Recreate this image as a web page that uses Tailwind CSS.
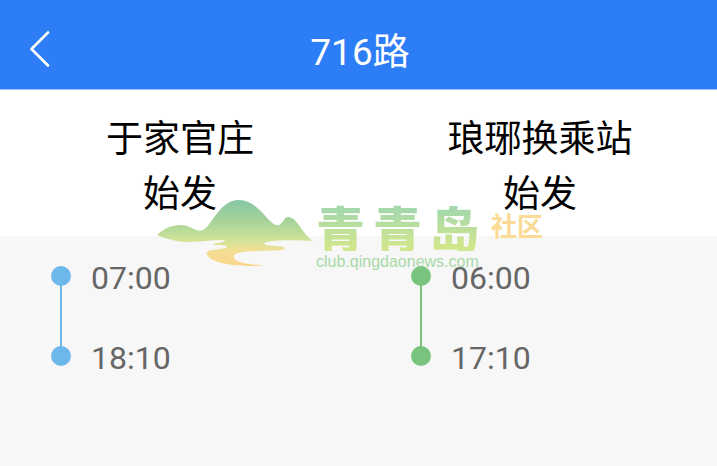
<!DOCTYPE html>
<html lang="zh-CN">
<head>
<meta charset="utf-8">
<meta name="viewport" content="width=device-width, initial-scale=1">
<title>716路</title>
<script src="https://cdn.jsdelivr.net/npm/@tailwindcss/browser@4"></script>
</head>
<body class="min-h-screen overflow-x-hidden bg-[#f7f7f7] font-[Roboto,'Noto_Sans_CJK_SC',sans-serif]">
<div class="relative isolate -mr-[3px]">
  <header class="grid h-[90px] grid-cols-[1fr_auto_1fr] items-center border-b border-[#9cc0fb] bg-[#2d7df6] pt-2 text-white">
    <button type="button" aria-label="返回" class="ml-5 flex size-10 items-center justify-center">
      <svg class="h-9 w-5" viewBox="0 0 20 36" fill="none" stroke="currentColor" stroke-width="2.6" stroke-linecap="round" stroke-linejoin="round"><path d="M18 1.500 1.500 18 18 34.500"/></svg>
    </button>
    <h1 class="pt-2 text-[37px] leading-[55px]">716路</h1>
  </header>
  <main>
    <div class="grid grid-cols-2 bg-white pt-[22px] pb-[14px] text-center text-[37px] leading-[55px] text-black">
      <h2 class="relative z-10">于家官庄<br>始发</h2>
      <h2 class="relative z-10">琅琊换乘站<br>始发</h2>
    </div>
    <div class="relative z-10 grid grid-cols-2 text-[32px] leading-[40px] text-[#666]">
      <ul class="relative pl-[51px]">
        <li class="flex h-20 items-center gap-5"><span class="size-5 rounded-full bg-[#6cb8ea]"></span><time class="pt-1">07:00</time></li>
        <li class="flex h-20 items-center gap-5"><span class="size-5 rounded-full bg-[#6cb8ea]"></span><time class="pt-1">18:10</time></li>
        <li aria-hidden="true" class="absolute top-10 bottom-10 left-[60px] w-0.5 bg-[#6cb8ea]"></li>
      </ul>
      <ul class="relative pl-[51px]">
        <li class="flex h-20 items-center gap-5"><span class="size-5 rounded-full bg-[#78c47f]"></span><time class="pt-1">06:00</time></li>
        <li class="flex h-20 items-center gap-5"><span class="size-5 rounded-full bg-[#78c47f]"></span><time class="pt-1">17:10</time></li>
        <li aria-hidden="true" class="absolute top-10 bottom-10 left-[60px] w-0.5 bg-[#78c47f]"></li>
      </ul>
    </div>
  </main>
  <!-- Community watermark, under the schedule text -->
  <div class="pointer-events-none absolute top-[199px] left-[157px] flex items-start">
    <svg class="h-[68px] w-[156px]" viewBox="21 27 468 204" aria-hidden="true">
      <defs><linearGradient id="hill" x1="0" y1="28" x2="0" y2="228" gradientUnits="userSpaceOnUse"><stop offset="0" stop-color="#84c6a3"/><stop offset=".3" stop-color="#a4d29b"/><stop offset=".6" stop-color="#cce397"/><stop offset=".76" stop-color="#f1df94"/><stop offset="1" stop-color="#fbd58b"/></linearGradient></defs>
      <path fill="url(#hill)" d="M21 135C41 116 65 105 90 105C118 105 132 121 151 122C181 124 203 30 267 30C325 30 354 103 382 106C397 107 400 81 415 81C440 81 453 125 487 153C440 149 344 149 343 161C343 171 404 164 404 175C403 189 254 174 251 199C249 216 293 222 338 227C273 232 170 221 170 188C172 176 230 180 231 170C231 164 193 168 190 163C190 158 225 159 224 153C222 145 163 157 110 156C77 155 42 145 21 135Z"/>
    </svg>
    <div class="ml-[3px] pt-1">
      <div class="flex gap-2 bg-linear-to-b from-[#a5d8ab] from-15% to-[#d0e68c] to-90% bg-clip-text font-['Noto_Sans_CJK_SC',sans-serif] text-[49px] leading-[48px] font-black text-transparent"><span>青</span><span>青</span><span>岛</span></div>
      <div class="pt-px font-['Liberation_Sans',sans-serif] text-[16px] leading-[20px] text-[#a9d9a8]">club.qingdaonews.com</div>
    </div>
    <div class="ml-3 pt-2 font-['Noto_Sans_CJK_SC',sans-serif] text-[26px] leading-[36px] font-bold text-[#fbdb94]">社区</div>
  </div>
</div>
</body>
</html>
